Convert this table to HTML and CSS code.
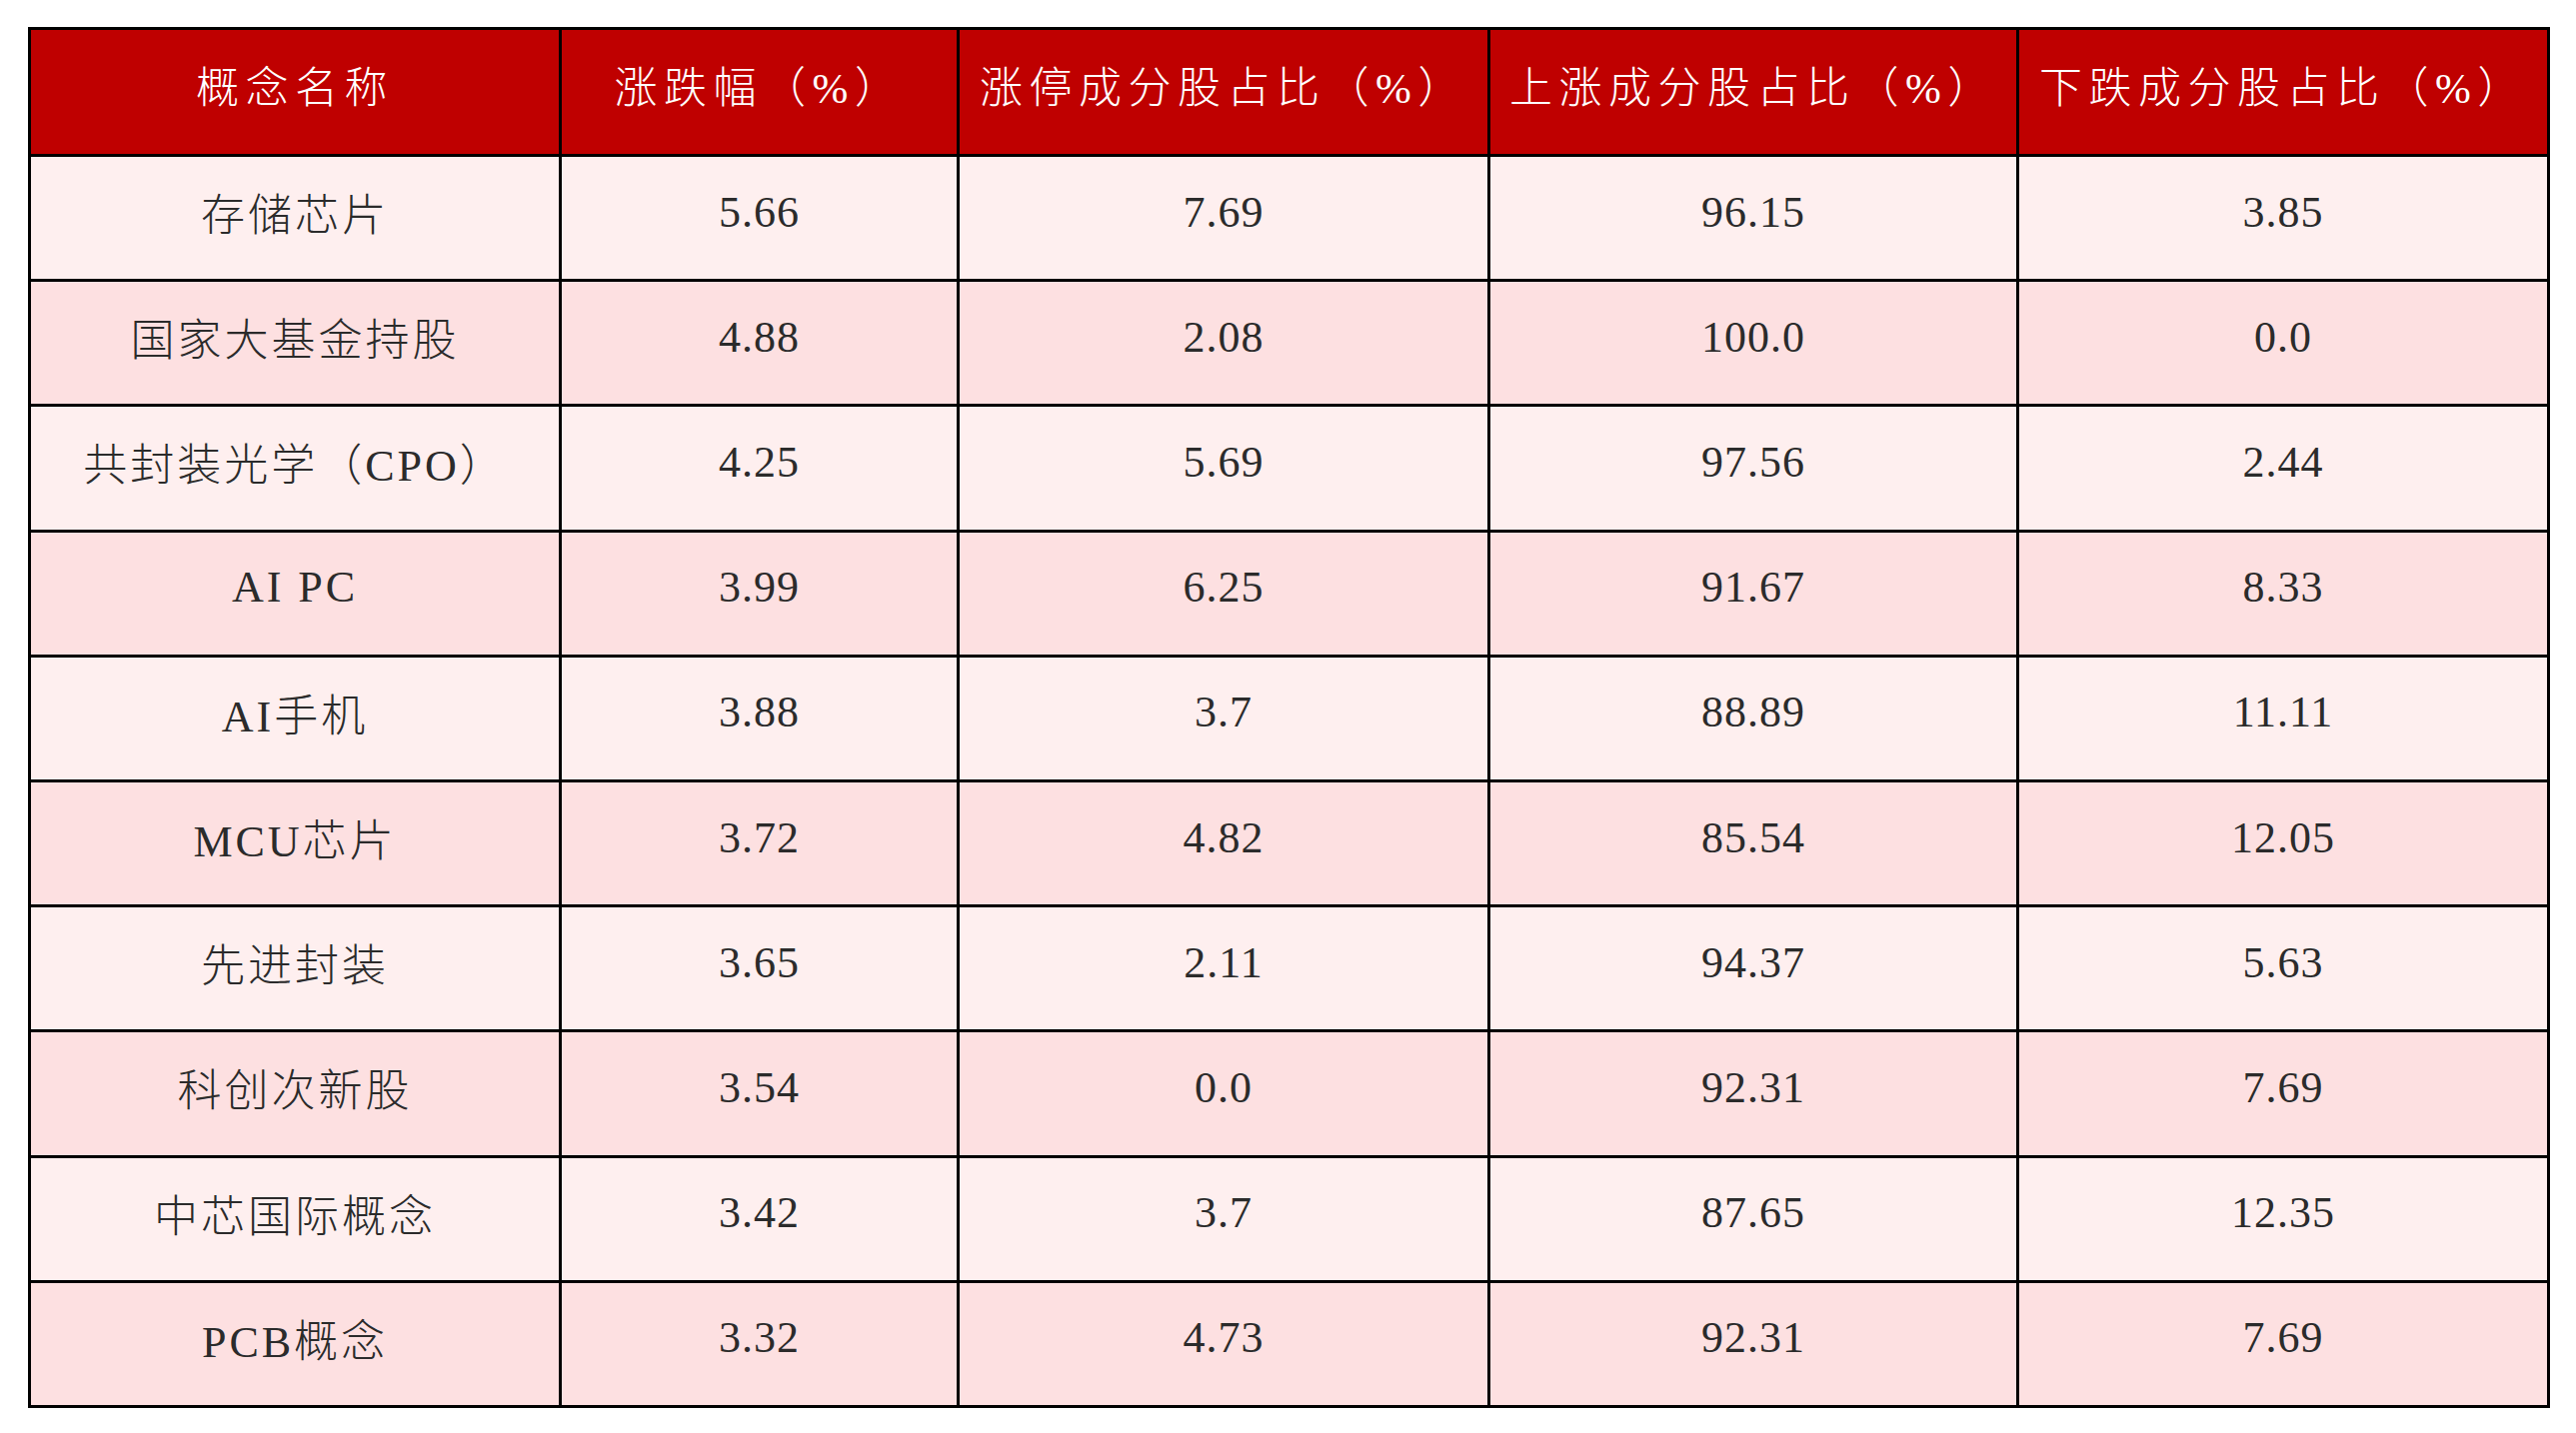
FILE: index.html
```html
<!DOCTYPE html>
<html lang="zh-CN">
<head>
<meta charset="utf-8">
<title>概念板块</title>
<link rel="stylesheet" href="styles.css">
</head>
<body>
<div class="page">
<table class="data">
  <colgroup>
    <col class="c1"><col class="c2"><col class="c3"><col class="c4"><col class="c5">
  </colgroup>
  <thead>
    <tr><th>概念名称</th><th>涨跌幅（%）</th><th>涨停成分股占比（%）</th><th>上涨成分股占比（%）</th><th>下跌成分股占比（%）</th></tr>
  </thead>
  <tbody>
    <tr><td>存储芯片</td><td>5.66</td><td>7.69</td><td>96.15</td><td>3.85</td></tr>
    <tr><td>国家大基金持股</td><td>4.88</td><td>2.08</td><td>100.0</td><td>0.0</td></tr>
    <tr><td>共封装光学（CPO）</td><td>4.25</td><td>5.69</td><td>97.56</td><td>2.44</td></tr>
    <tr><td>AI PC</td><td>3.99</td><td>6.25</td><td>91.67</td><td>8.33</td></tr>
    <tr><td>AI手机</td><td>3.88</td><td>3.7</td><td>88.89</td><td>11.11</td></tr>
    <tr><td>MCU芯片</td><td>3.72</td><td>4.82</td><td>85.54</td><td>12.05</td></tr>
    <tr><td>先进封装</td><td>3.65</td><td>2.11</td><td>94.37</td><td>5.63</td></tr>
    <tr><td>科创次新股</td><td>3.54</td><td>0.0</td><td>92.31</td><td>7.69</td></tr>
    <tr><td>中芯国际概念</td><td>3.42</td><td>3.7</td><td>87.65</td><td>12.35</td></tr>
    <tr><td>PCB概念</td><td>3.32</td><td>4.73</td><td>92.31</td><td>7.69</td></tr>
  </tbody>
</table>
</div>
</body>
</html>
```
FILE: styles.css
```css
html, body {
  margin: 0;
  padding: 0;
  background: #ffffff;
}
.page {
  padding: 27px 0 0 28px;
}
.data {
  border-collapse: collapse;
  table-layout: fixed;
  width: 2520px;
  font-family: "Liberation Serif", "Noto Sans CJK SC", serif;
  font-weight: 300;
}
.c1 { width: 531px; }
.c2 { width: 398px; }
.c3 { width: 531px; }
.c4 { width: 529px; }
.c5 { width: 531px; }
.data th, .data td {
  border: 3px solid #000000;
  text-align: center;
  vertical-align: middle;
  padding: 0;
  white-space: nowrap;
  box-sizing: border-box;
}
.data th {
  height: 127px;
  background: #bf0000;
  color: #ffffff;
  font-size: 43px;
  font-weight: 300;
  letter-spacing: 6.5px;
  padding-bottom: 17px;
}
.data td {
  height: 125.2px;
  color: #2b2b2b;
  font-size: 44px;
  letter-spacing: 1px;
  padding-bottom: 12px;
}
.data td:first-child {
  letter-spacing: 3px;
}
.data tbody tr:nth-child(odd) td {
  background: #feefef;
}
.data tbody tr:nth-child(even) td {
  background: #fde0e1;
}
```
